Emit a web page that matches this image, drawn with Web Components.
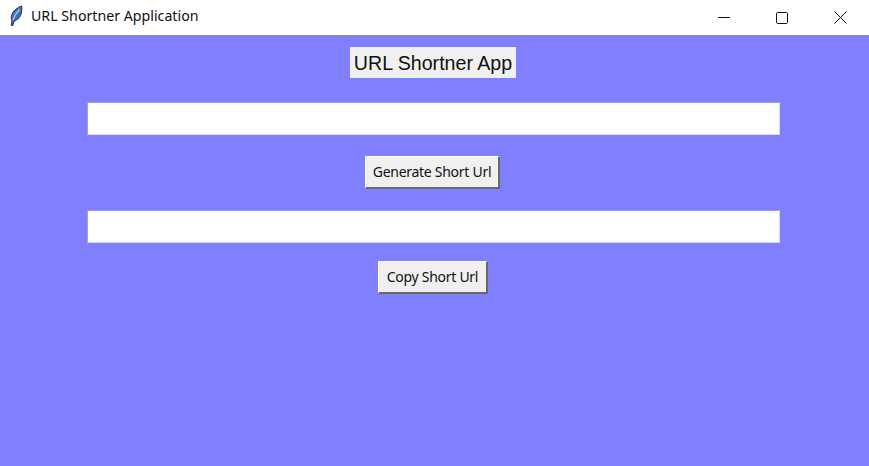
<!DOCTYPE html>
<html>
<head>
<meta charset="utf-8">
<title>URL Shortner Application</title>
<style>
  html, body { margin: 0; height: 100%; overflow: hidden; background: #8080ff; }
  body { display: flex; flex-direction: column; }
</style>
</head>
<body>
<title-bar>URL Shortner Application</title-bar>
<app-window>
  <app-label>URL Shortner App</app-label>
  <url-field style="margin-top:24px"></url-field>
  <app-button style="margin:21px 2px 0 0; --pad:6.5px">Generate Short Url</app-button>
  <url-field style="margin-top:21px"></url-field>
  <app-button style="margin:18px 1px 0 0; --pad:7.5px">Copy Short Url</app-button>
</app-window>

<script>
// Window title bar with the feather icon and the caption buttons
class TitleBar extends HTMLElement {
  constructor() {
    super();
    this.attachShadow({ mode: 'open' });
  }
  connectedCallback() {
    this.shadowRoot.innerHTML = `
      <style>
        :host {
          display: flex;
          align-items: center;
          flex: none;
          height: 35px;
          background: #fff;
          border-bottom: 1px solid #8a8ab0;
          font: 14.2px "Noto Sans", "Open Sans", sans-serif;
          color: #111;
        }
        .icon { width: 16px; height: 22px; margin: 0 7px 4px 8px; flex: none; }
        .title { flex: 1; white-space: nowrap; margin-top: -4px; }
        .caption { display: flex; align-self: stretch; }
        .caption div { width: 58px; display: flex; align-items: center; justify-content: center; }
        svg { display: block; }
      </style>
      <svg class="icon" viewBox="0 0 16 22">
        <path d="M3.2 20.5 L4 15.8 C1.6 12 4.6 4.2 13.6 1 C14.6 7 12.6 14.4 6.4 15.8 L4.8 20.5 Z" fill="#3f72bd" stroke="#2a3246" stroke-width="1"/>
        <path d="M5 15 C6.5 10.5 8.5 7.5 11.5 4.5" fill="none" stroke="#b4cbe8" stroke-width="1.2"/>
      </svg>
      <span class="title"><slot></slot></span>
      <div class="caption">
        <div><svg width="12" height="12" viewBox="0 0 12 12"><path d="M0 5.5H12" stroke="#111" fill="none"/></svg></div>
        <div><svg width="12" height="12" viewBox="0 0 12 12"><rect x="0.5" y="0.5" width="11" height="11" rx="1.2" stroke="#111" fill="none"/></svg></div>
        <div><svg width="13" height="13" viewBox="0 0 13 13"><path d="M0.5 0.5L12.5 12.5M12.5 0.5L0.5 12.5" stroke="#111" fill="none"/></svg></div>
      </div>
    `;
  }
}

// Blue content area, everything is centred in a column
class AppWindow extends HTMLElement {
  constructor() {
    super();
    this.attachShadow({ mode: 'open' });
  }
  connectedCallback() {
    this.shadowRoot.innerHTML = `
      <style>
        :host {
          display: flex;
          flex-direction: column;
          align-items: center;
          flex: 1;
          padding: 11px 2px 0 0;
          background: #8080ff;
        }
      </style>
      <slot></slot>
    `;
  }
}

class AppLabel extends HTMLElement {
  constructor() {
    super();
    this.attachShadow({ mode: 'open' });
  }
  connectedCallback() {
    this.shadowRoot.innerHTML = `
      <style>
        :host {
          display: block;
          box-sizing: border-box;
          width: 166px;
          height: 31px;
          margin-right: 1px;
          padding-top: 1px;
          text-align: center;
          background: #f0f0f0;
          color: #111;
          font: 19.6px/31px "Liberation Sans", Arial, sans-serif;
          white-space: nowrap;
        }
      </style>
      <slot></slot>
    `;
  }
}

class UrlField extends HTMLElement {
  constructor() {
    super();
    this.attachShadow({ mode: 'open' });
  }
  connectedCallback() {
    this.shadowRoot.innerHTML = `
      <style>
        :host { display: block; width: 693px; height: 33px; }
        input {
          display: block;
          box-sizing: border-box;
          width: 100%;
          height: 100%;
          margin: 0;
          padding: 0 2px;
          background: #fff;
          border: 1px solid;
          border-color: #a0a0e8 #d8d8f8 #d8d8f8 #a0a0e8;
          outline: none;
          font: 14px "Noto Sans", sans-serif;
        }
      </style>
      <input type="text">
    `;
  }
}

class AppButton extends HTMLElement {
  constructor() {
    super();
    this.attachShadow({ mode: 'open' });
  }
  connectedCallback() {
    this.shadowRoot.innerHTML = `
      <style>
        :host { display: block; }
        button {
          display: block;
          box-sizing: border-box;
          height: 33px;
          margin: 0;
          padding: 0 var(--pad, 6px) 2px;
          background: #f0f0f0;
          color: #111;
          border: 2px solid;
          border-color: #fff #696969 #696969 #fff;
          border-width: 1px 2px 2px 1px;
          font: 14px "Noto Sans", "Open Sans", sans-serif;
          letter-spacing: -0.28px;
          white-space: nowrap;
        }
      </style>
      <button><slot></slot></button>
    `;
  }
}

customElements.define('title-bar', TitleBar);
customElements.define('app-window', AppWindow);
customElements.define('app-label', AppLabel);
customElements.define('url-field', UrlField);
customElements.define('app-button', AppButton);
</script>
</body>
</html>
